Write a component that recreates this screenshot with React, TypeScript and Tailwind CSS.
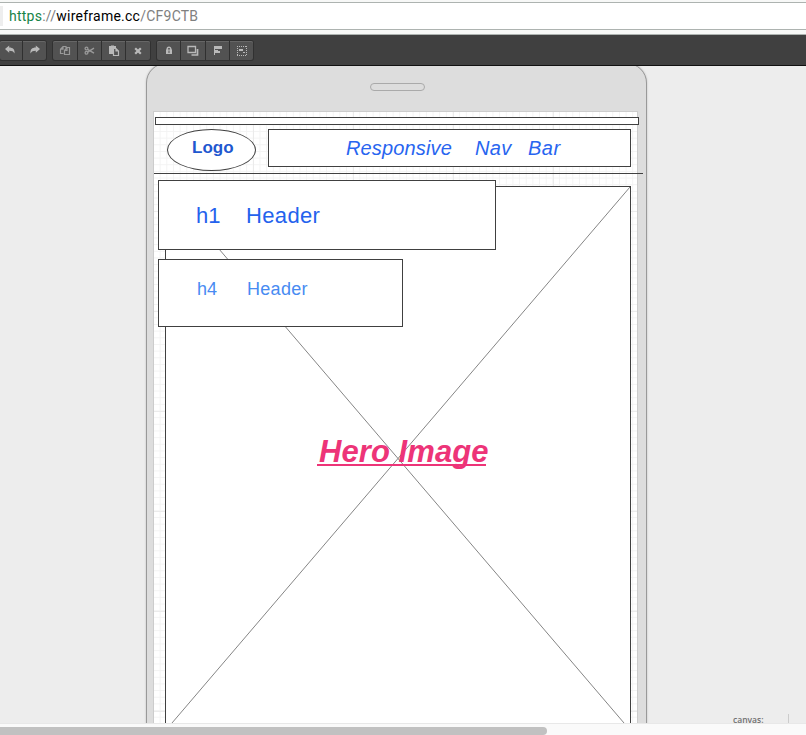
import type { ReactNode } from "react";

function ToolGroup({ children, className = "" }: { children: ReactNode; className?: string }) {
  return (
    <div className={`flex h-[19px] divide-x divide-[#303030] rounded-[2px] bg-[#525252] shadow-[0_0_0_1px_#313131,inset_0_1px_0_#666] ${className}`}>
      {children}
    </div>
  );
}

function Tool({ label, width = "w-6", dim = false, children }: { label: string; width?: string; dim?: boolean; children: ReactNode }) {
  return (
    <button aria-label={label} className={`flex h-full items-center justify-center pt-px ${width} ${dim ? "text-[#999]" : "text-[#b9b9b9]"}`}>
      <svg width="12" height="12" viewBox="0 0 12 12" fill="none" stroke="currentColor">
        {children}
      </svg>
    </button>
  );
}

function Toolbar() {
  return (
    <div className="flex h-[31px] shrink-0 items-center border-b border-[#111] bg-[#404040]">
      <ToolGroup>
        <Tool label="Undo" width="w-[23px]">
          <path d="M0 4 4.200 .5v2C8 2.500 10 4.500 9.500 8.500 8.500 6.300 7 5.700 4.200 5.700v2z" fill="currentColor" stroke="none" />
        </Tool>
        <Tool label="Redo" width="w-[23px]">
          <path d="M11 4 6.800 .5v2C3 2.500 1 4.500 1.500 8.500c1-2.200 2.500-2.800 5.300-2.800v2z" fill="currentColor" stroke="none" />
        </Tool>
      </ToolGroup>
      <ToolGroup className="ml-[7px]">
        <Tool label="Copy" width="w-[25px]" dim>
          <path d="M4.500 8.500h-3V4.200L4 1.500h3V3M4 1.500v2.700H1.500M5.500 5.500 8 2.500h2.500v7h-5zM8 2.500v3H5.500" strokeWidth="1.200" />
        </Tool>
        <Tool label="Cut" dim>
          <circle cx="2.500" cy="3.500" r="1.400" strokeWidth="1.300" />
          <circle cx="2.500" cy="7.800" r="1.400" strokeWidth="1.300" />
          <path d="m3.500 4.300 6.500 3.900M3.500 7.200l6.500-4" strokeWidth="1.400" />
        </Tool>
        <Tool label="Paste">
          <path d="M1 1h2V.5h3V1h2v2H5v6H1z" fill="currentColor" stroke="none" />
          <path d="M5.500 3.500H8L10.500 6v4.500h-5zM8 3.500V6h2.500" strokeWidth="1.200" />
        </Tool>
        <Tool label="Delete">
          <path d="m3.200 3.200 5.600 5.600M8.800 3.200 3.200 8.800" strokeWidth="2.200" />
        </Tool>
      </ToolGroup>
      <ToolGroup className="ml-[7px]">
        <Tool label="Lock">
          <path d="M4.200 5.500V4a1.800 1.800 0 0 1 3.600 0v1.500" strokeWidth="1.400" />
          <path fillRule="evenodd" d="M3 4.500h6V9H3zm2.500 1V8h1V5.500z" fill="currentColor" stroke="none" />
        </Tool>
        <Tool label="Arrange" width="w-[25px]">
          <path d="M1 1.500h7.500v6H1z" strokeWidth="1.300" />
          <path d="M10.500 4v6H4.500" strokeWidth="1.700" />
        </Tool>
        <Tool label="Align">
          <path d="M2.500 1v9" />
          <path d="M3 1h7v3H3zM3 5h3v1H3zM3 6h5v2H3z" fill="currentColor" stroke="none" />
        </Tool>
        <Tool label="Group" width="w-[23px]">
          <path d="M1 1.500h10M1 10.500h10M1.500 1v10M10.500 1v10" strokeDasharray="1 1" />
          <path d="M3 4h4v2H3zM7 7h2v1H7z" fill="currentColor" stroke="none" />
        </Tool>
      </ToolGroup>
    </div>
  );
}

const box = "absolute border border-[#404040] bg-white";
const label = "absolute whitespace-pre leading-none";

function Phone() {
  return (
    <div className="relative ml-[146px] h-[680px] w-[501px] rounded-t-[20px] border border-[#999] bg-[#ddd] shadow-[0_0_2px_#bbb] mt-[-3px]">
      <div className="ml-[223px] mt-[19px] h-2 w-[55px] rounded-full border border-[#aaa]" />
      <div className="mt-[20px] ml-[6px] h-[640px] w-[485px] border border-[#ccc] bg-white bg-[linear-gradient(to_right,#ebebeb_1px,transparent_1px),linear-gradient(#ebebeb_1px,transparent_1px),linear-gradient(to_right,#f3f3f3_1px,transparent_1px),linear-gradient(#f3f3f3_1px,transparent_1px)] bg-[size:100px_100px,100px_100px,6.667px_6.667px,6.667px_6.667px] bg-[position:-1px_-1px]" />
    </div>
  );
}

function Wireframe() {
  return (
    <>
      <div className={`${box} left-[155px] top-[51px] h-2 w-[484px]`} />
      <div className={`${box} left-[167px] top-[63px] h-[42px] w-[89px] rounded-[50%]`} />
      <span className={`${label} left-[192px] top-[73px] text-[17px] font-bold text-[#1f58cf]`}>Logo</span>
      <div className={`${box} left-[268px] top-[63px] h-[38px] w-[363px]`} />
      <span className={`${label} left-[346px] top-[72px] text-[20px] tracking-[0.15px] italic text-[#2865f0]`}>Responsive</span>
      <span className={`${label} left-[475px] top-[72px] text-[20px] tracking-[0.3px] italic text-[#2865f0]`}>Nav</span>
      <span className={`${label} left-[528px] top-[72px] text-[20px] tracking-[0.5px] italic text-[#2865f0]`}>Bar</span>
      <div className="absolute left-[154px] top-[107px] h-px w-[489px] bg-[#404040]" />
      <div className={`${box} left-[165px] top-[120px] h-[548px] w-[466px]`}>
        <svg className="block" width="464" height="546" fill="none" stroke="#858585">
          <path d="M0 0 464 543M464 0 0 543" />
        </svg>
      </div>
      <span className={`${label} left-[319px] top-[370px] text-[31px] tracking-[0.07px] font-bold italic text-[#ed3478]`}>Hero Image</span>
      <div className="absolute left-[317px] top-[398px] h-[2px] w-[169px] bg-[#ed3478]" />
      <div className={`${box} left-[158px] top-[114px] h-[70px] w-[338px]`} />
      <span className={`${label} left-[196px] top-[139px] text-[22px] text-[#2462ed]`}>h1</span>
      <span className={`${label} left-[246px] top-[139px] text-[22px] tracking-[0.35px] text-[#2462ed]`}>Header</span>
      <div className={`${box} left-[158px] top-[193px] h-[68px] w-[245px]`} />
      <span className={`${label} left-[197px] top-[214px] text-[18px] text-[#488bf2]`}>h4</span>
      <span className={`${label} left-[247px] top-[214px] text-[18px] tracking-[0.3px] text-[#488bf2]`}>Header</span>
    </>
  );
}

export default function App() {
  return (
    <div className="flex h-[735px] w-[806px] flex-col overflow-hidden bg-[#ededed] font-['Liberation_Sans',Arial,sans-serif]">
      <div className="h-[35px] shrink-0 border-b border-[#adb3b0] bg-[#f7f8f7] pt-[2px]">
        <div className="flex h-7 items-center border-y border-[#adb3b0] bg-white font-[Roboto,sans-serif] text-[14px] text-[#808080]">
          <div className="h-5 w-[3px] bg-[#eee]" />
          <span className="ml-[6px] whitespace-pre tracking-[0.24px]"><span className="text-[#168447]">https</span>://<span className="text-black">wireframe.cc</span>/CF9CTB</span>
        </div>
      </div>
      <Toolbar />
      <main className="relative h-[657px] shrink-0 overflow-hidden">
        <Phone />
        <Wireframe />
        <span className="absolute left-[733px] top-[650px] font-['Open_Sans',sans-serif] text-[8.5px] font-semibold leading-[7px] text-[#707070]">canvas:</span>
        <div className="absolute left-[788px] top-[648px] h-[9px] w-px bg-[#ccc]" />
      </main>
      <div className="h-3 shrink-0 border-t border-[#e8e8e8] bg-[#fafafa] pt-[3px]">
        <div className="h-2 w-[547px] rounded-r-full bg-[#c1c1c1]" />
      </div>
    </div>
  );
}
